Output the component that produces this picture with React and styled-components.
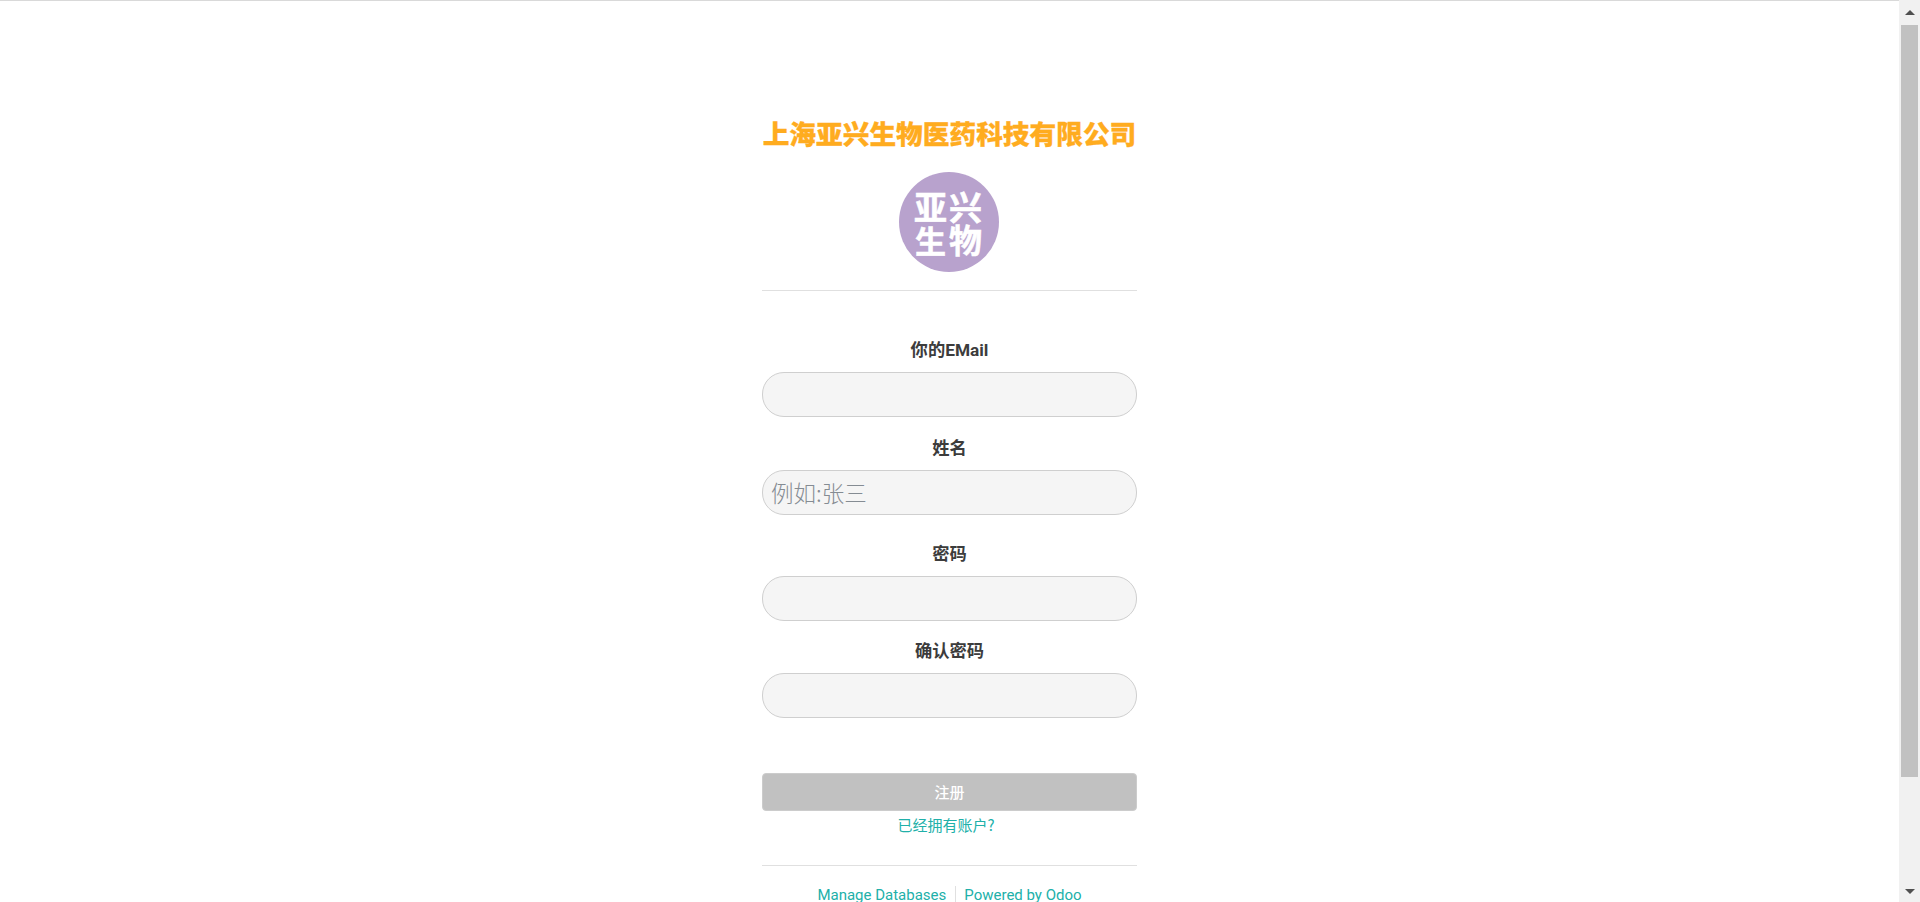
import React from 'react';
import styled, { createGlobalStyle } from 'styled-components';

const App = () => {
	return (
		<>
			<GlobalStyle />
			<Page>
				<Card>
					<CompanyName>上海亚兴生物医药科技有限公司</CompanyName>
					<LogoWrap>
						<Logo viewBox="0 0 100 100" aria-label="亚兴生物">
							<circle cx="50" cy="50" r="50" fill="#b8a2cd" />
							<LogoText x="15" y="48" fontSize="33">亚</LogoText>
							<LogoText x="50" y="48" fontSize="33">兴</LogoText>
							<LogoText x="16" y="81" fontSize="31">生</LogoText>
							<LogoText x="50" y="81" fontSize="33">物</LogoText>
						</Logo>
					</LogoWrap>
					<Divider />
					<Form>
						<Field $top={47}>
							<Label>你的EMail</Label>
							<Input />
						</Field>
						<Field $top={19}>
							<Label>姓名</Label>
							<Input placeholder="例如:张三" />
						</Field>
						<Field $top={27}>
							<Label>密码</Label>
							<Input type="password" />
						</Field>
						<Field $top={18}>
							<Label>确认密码</Label>
							<Input type="password" />
						</Field>
						<Submit type="button">注册</Submit>
						<AccountLink href="#">已经拥有账户?</AccountLink>
					</Form>
					<FooterDivider />
					<Footer>
						<FooterLink href="#">Manage Databases</FooterLink>
						<FooterLink href="#" $separated>Powered by Odoo</FooterLink>
					</Footer>
				</Card>
			</Page>
			<ScrollBar>
				<ArrowUp />
				<Thumb />
				<ArrowDown />
			</ScrollBar>
		</>
	);
};

export default App;

// Styles

const GlobalStyle = createGlobalStyle`
	body {
		margin: 0;
		background: #fff;
		font-family: Roboto, "Noto Sans CJK SC", sans-serif;
		color: #333;
	}
	* {
		box-sizing: border-box;
	}
`;

const Page = styled.div`
	border-top: 1px solid #d9d9d9;
	padding: 116px 21px 0 0;
	min-height: 1032px;
	display: flex;
	justify-content: center;
`;

const Card = styled.div`
	width: 375px;
	display: flex;
	flex-direction: column;
`;

const CompanyName = styled.div`
	font-family: "Noto Sans CJK SC", sans-serif;
	font-size: 26.7px;
	font-weight: 900;
	line-height: 32px;
	color: #ffac1f;
	text-align: center;
	white-space: nowrap;
	-webkit-text-stroke: 0.3px #ffac1f;
`;

const LogoWrap = styled.div`
	display: flex;
	justify-content: center;
	margin: 23px 2px 0 0;
`;

const Logo = styled.svg`
	width: 100px;
	height: 100px;
	display: block;
`;

const LogoText = styled.text`
	font-family: "Noto Sans CJK SC", sans-serif;
	font-weight: 700;
	fill: #fff;
	stroke: #fff;
	stroke-width: 0.5px;
`;

const Divider = styled.div`
	height: 1px;
	background: #e0e0e0;
	margin-top: 18px;
`;

const Form = styled.form`
	display: flex;
	flex-direction: column;
`;

const Field = styled.div`
	display: flex;
	flex-direction: column;
	margin-top: ${(props) => props.$top}px;
`;

const Label = styled.label`
	font-size: 17.3px;
	font-weight: 700;
	line-height: 24px;
	color: #3c3c3c;
	text-align: center;
	margin-bottom: 10px;
`;

const Input = styled.input`
	width: 100%;
	height: 45px;
	padding: 0 8px 2px;
	border: 1px solid #cfcfcf;
	border-radius: 22px;
	background: #f5f5f5;
	font-family: "Noto Sans CJK SC", sans-serif;
	font-size: 22.5px;
	font-weight: 300;
	outline: none;
	&::placeholder {
		color: #858c93;
		opacity: 1;
	}
`;

const Submit = styled.button`
	height: 38px;
	margin-top: 55px;
	padding: 0 0 2px;
	border: 1px solid #cccccc;
	border-radius: 4px;
	background: #c1c1c1;
	color: #fff;
	font-family: "Noto Sans CJK SC", sans-serif;
	font-size: 15px;
	font-weight: 500;
`;

const AccountLink = styled.a`
	margin-top: 3px;
	padding-right: 7px;
	font-family: "Noto Sans CJK SC", sans-serif;
	font-size: 15px;
	line-height: 22px;
	color: #21b0a9;
	text-align: center;
	text-decoration: none;
`;

const FooterDivider = styled.div`
	height: 1px;
	background: #e0e0e0;
	margin-top: 29px;
`;

const Footer = styled.div`
	display: flex;
	justify-content: center;
	margin-top: 20px;
`;

const FooterLink = styled.a`
	font-size: 15px;
	line-height: 18px;
	color: #21b0a9;
	text-decoration: none;
	${(props) => props.$separated && `
		margin-left: 9px;
		padding-left: 8px;
		border-left: 1px solid #e0e0e0;
	`}
`;

const ScrollBar = styled.div`
	position: fixed;
	top: 0;
	right: 0;
	bottom: 0;
	width: 21px;
	background: #f1f1f1;
	display: flex;
	flex-direction: column;
	align-items: center;
	padding: 10px 0 8px;
`;

const ArrowUp = styled.div`
	width: 0;
	height: 0;
	border-left: 5px solid transparent;
	border-right: 5px solid transparent;
	border-bottom: 5px solid #505050;
`;

const ArrowDown = styled.div`
	width: 0;
	height: 0;
	margin-top: auto;
	border-left: 5px solid transparent;
	border-right: 5px solid transparent;
	border-top: 5px solid #505050;
`;

const Thumb = styled.div`
	width: 17px;
	height: 752px;
	margin-top: 10px;
	background: #c1c1c1;
`;
